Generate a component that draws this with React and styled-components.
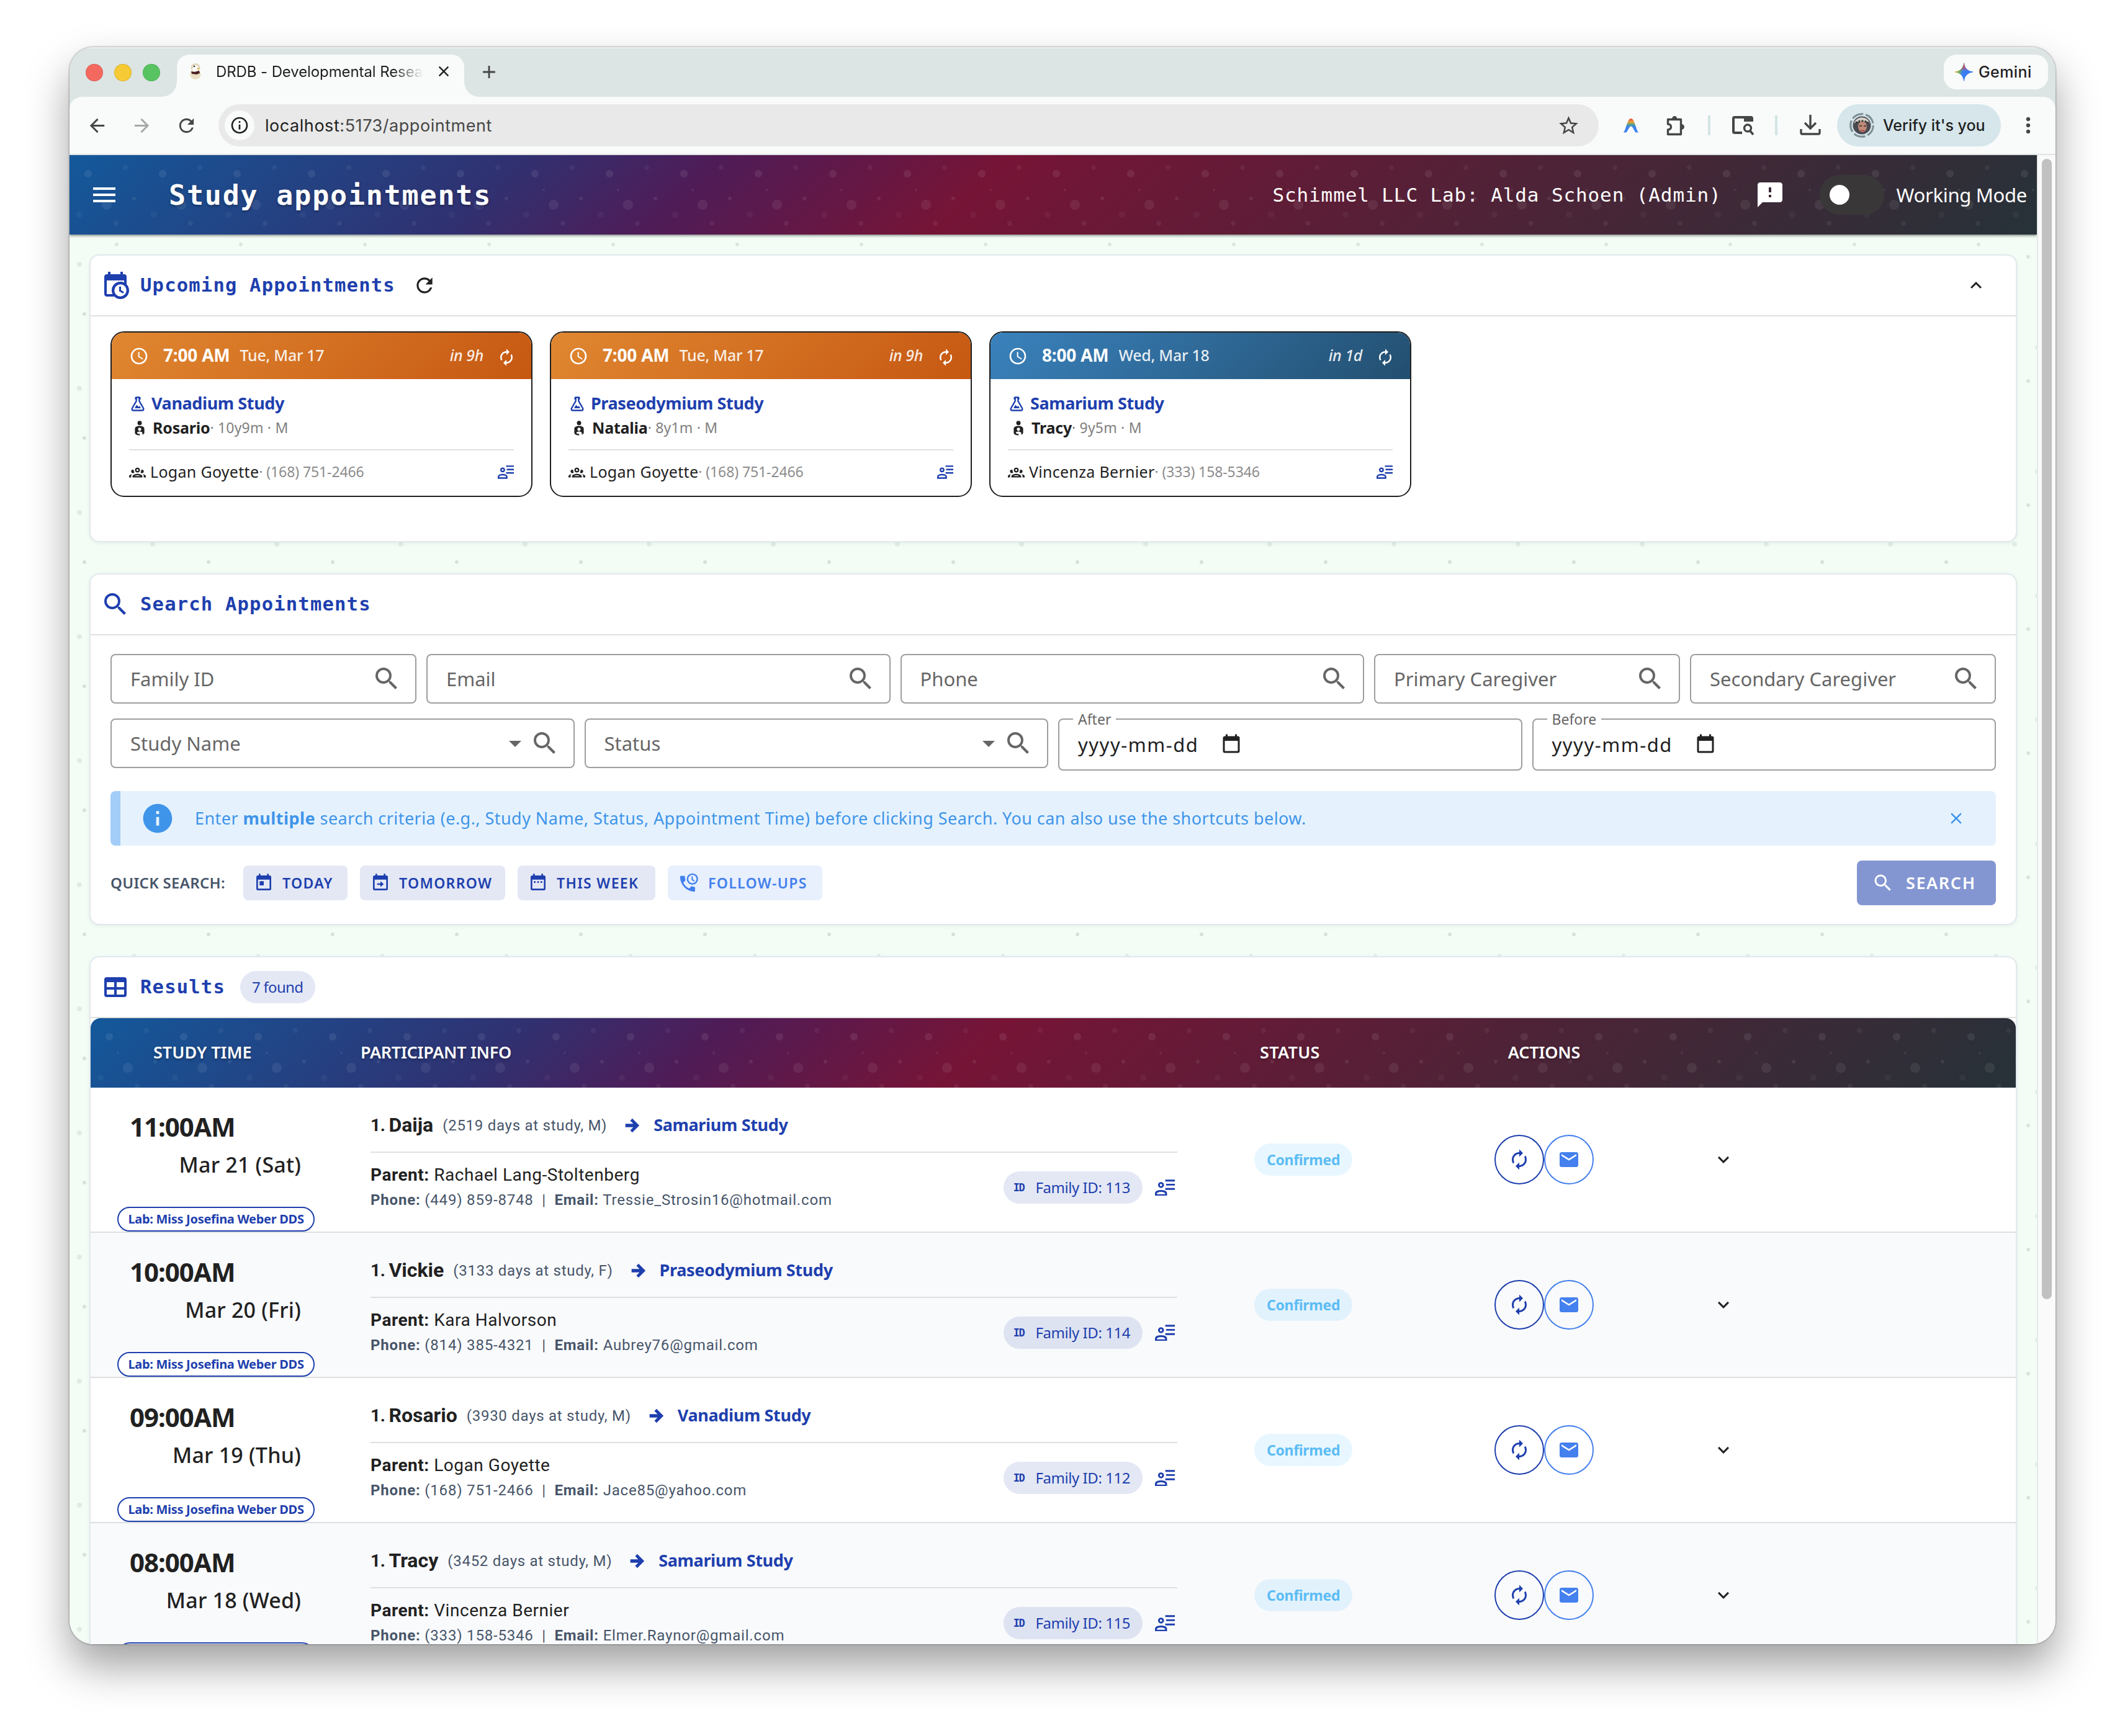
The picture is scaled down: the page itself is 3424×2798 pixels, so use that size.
import React from "react";
import styled, { createGlobalStyle, css } from "styled-components";
import {
  MdMenu, MdFeedback, MdSearch, MdArrowDropDown, MdAccessTime, MdAutorenew,
  MdEmail, MdInfo, MdClose, MdStarOutline, MdAdd, MdArrowBack, MdArrowForward,
  MdRefresh, MdOutlineFileDownload, MdInfoOutline, MdOutlineExtension, MdMoreVert,
} from "react-icons/md";

const sans = `"Noto Sans", "Open Sans", sans-serif`;
const roboto = `Roboto, "Noto Sans", sans-serif`;
const mono = `"DejaVu Sans Mono", "Liberation Mono", monospace`;
const chrome = `Inter, Roboto, sans-serif`;
const navy = "#1e3fae";
const ink = "#212121";

const GlobalStyle = createGlobalStyle`
  *, *::before, *::after { box-sizing: border-box; }
  body { margin: 0; background: #fff; font-family: ${sans}; color: ${ink}; }
  svg { display: block; flex: none; }
`;

/* ---------- text ---------- */

const Text = styled.span`
  white-space: nowrap;
  flex: none;
  font-family: ${(p) => p.$font || sans};
  font-size: ${(p) => p.$size}px;
  font-weight: ${(p) => p.$weight || 400};
  letter-spacing: ${(p) => p.$ls || 0}px;
  color: ${(p) => p.$color || "inherit"};
  font-style: ${(p) => (p.$italic ? "italic" : "normal")};
  padding-bottom: ${(p) => p.$lift || 0}px;
`;

/* ---------- window ---------- */

const Desktop = styled.div`
  width: 3424px;
  height: 2798px;
  padding: 76px 112px 148px;
  overflow: hidden;
`;

const Window = styled.div`
  width: 3200px;
  height: 2574px;
  display: flex;
  flex-direction: column;
  overflow: hidden;
  border-radius: 38px;
  background: #dce4e4;
  box-shadow: 0 0 3px rgba(0, 0, 0, 0.55), 0 36px 68px rgba(0, 0, 0, 0.37);
`;

const TabStrip = styled.div`
  height: 80px;
  flex: none;
  display: flex;
  align-items: flex-end;
  padding: 0 12px 0 26px;
  background: #dce4e4;
  box-shadow: inset 0 2px 0 rgba(255, 255, 255, 0.45);
`;

const Lights = styled.div`
  display: flex;
  gap: 18px;
  margin-bottom: 25px;
`;

const Light = styled.i`
  width: 28px;
  height: 28px;
  border-radius: 50%;
  background: ${(p) => p.$color};
  box-shadow: inset 0 0 0 1px rgba(0, 0, 0, 0.1);
`;

const Tab = styled.div`
  position: relative;
  width: 463px;
  height: 68px;
  margin-left: 27px;
  padding: 0 20px 14px 20px;
  display: flex;
  align-items: center;
  background: #f9fafa;
  border-radius: 20px 20px 0 0;
  &::before, &::after {
    content: "";
    position: absolute;
    bottom: 0;
    width: 24px;
    height: 24px;
  }
  &::before {
    left: -24px;
    background: radial-gradient(circle at 0 0, transparent 23.5px, #f9fafa 24px);
  }
  &::after {
    right: -24px;
    background: radial-gradient(circle at 100% 0, transparent 23.5px, #f9fafa 24px);
  }
`;

const TabTitle = styled(Text)`
  width: 336px;
  margin-left: 23px;
  overflow: hidden;
  mask-image: linear-gradient(90deg, #000 285px, transparent 334px);
`;

const TabClose = styled(MdClose)`
  width: 28px;
  height: 28px;
  margin-left: 17px;
  color: #1f1f1f;
`;

const NewTab = styled(MdAdd)`
  width: 34px;
  height: 34px;
  margin: 0 auto 23px 23px;
  color: #444746;
`;

const Gemini = styled.div`
  width: 168px;
  height: 56px;
  margin-bottom: 12px;
  display: flex;
  align-items: center;
  gap: 9px;
  padding-left: 18px;
  background: #f9fafa;
  border-radius: 20px;
`;

const Toolbar = styled.div`
  height: 94px;
  flex: none;
  display: flex;
  align-items: center;
  padding: 0 30px;
  background: #f9fafa;
  border-bottom: 2px solid #dfe3e3;
  border-radius: 20px 20px 0 0;
  color: #444746;
`;

const NavIcon = styled.span`
  display: flex;
  flex: none;
  width: 72px;
  margin-left: ${(p) => p.$shift || 0}px;
  opacity: ${(p) => (p.$dim ? 0.45 : 1)};
  svg { width: 35px; height: 35px; }
`;

const Omnibox = styled.div`
  width: 2224px;
  flex: none;
  height: 68px;
  margin-left: -3px;
  display: flex;
  align-items: center;
  padding: 0 30px 0 10px;
  background: #e9e9e9;
  border-radius: 34px;
`;

const SiteInfo = styled.span`
  width: 48px;
  height: 48px;
  margin-right: 17px;
  display: grid;
  place-items: center;
  background: #f9fafa;
  border-radius: 50%;
  color: #1f1f1f;
  svg { width: 32px; height: 32px; }
`;

const Url = styled(Text)`
  flex: 1;
  b { font-weight: 400; color: #1f1f1f; }
`;

const Tools = styled.div`
  display: flex;
  align-items: center;
  flex: 1;
`;

const Divider = styled.i`
  width: 4px;
  height: 32px;
  flex: none;
  background: #d3e5e5;
`;

const Spacer = styled.i`
  width: ${(p) => p.$w}px;
  flex: none;
`;

const Profile = styled.div`
  width: 264px;
  height: 68px;
  flex: none;
  display: flex;
  align-items: center;
  gap: 14px;
  padding-left: 20px;
  background: #d6e6ea;
  border-radius: 34px;
`;

/* ---------- page ---------- */

const Viewport = styled.div`
  flex: 1;
  min-height: 0;
  display: flex;
`;

const dot = (x, y, r, color) =>
  `radial-gradient(circle at ${x}px ${y}px, ${color} ${r - 0.5}px, transparent ${r + 0.5}px)`;

const Page = styled.main`
  width: 3170px;
  overflow: hidden;
  background-color: #f3fdf6;
  background-image: ${[
    dot(76, 144, 3, "#dce5e2"),
    dot(16, 176, 4, "#e0ebe5"),
    dot(24, 56, 3, "#d6e0dd"),
    dot(134, 27, 4, "#e3ede8"),
    dot(104, 90, 3, "#e4eee9"),
    dot(156, 164, 3, "#d9e3e0"),
    dot(171, 110, 4, "#e2ece7"),
  ].join(",")};
  background-size: 200px 200px;
`;

const spectrum = css`
  background-image: ${[
    dot(30, 30, 6, "rgba(255,255,255,.08)"),
    dot(90, 20, 4, "rgba(255,255,255,.05)"),
    dot(104, 70, 3, "rgba(255,255,255,.08)"),
    dot(60, 80, 8, "rgba(255,255,255,.07)"),
    dot(16, 96, 5, "rgba(255,255,255,.04)"),
    dot(75, 110, 4, "rgba(255,255,255,.06)"),
    dot(44, 56, 2, "rgba(255,255,255,.07)"),
  ].join(",")},
    linear-gradient(135deg, #13599b 0%, #303171 22%, #4f1c57 32%, #761436 46%, #263238 100%);
  background-size: 120px 120px, 120px 120px, 120px 120px, 120px 120px, 120px 120px, 120px 120px, 120px 120px, 100% 100%;
`;

const AppBar = styled.header`
  position: relative;
  height: 128px;
  display: flex;
  align-items: center;
  padding: 0 16px 0 32px;
  color: #fff;
  ${spectrum}
  box-shadow: 0 2px 4px rgba(0, 0, 0, 0.45);
`;

const MenuButton = styled(MdMenu)`
  width: 48px;
  height: 48px;
`;

const AppTitle = styled.h1`
  margin: 0 auto 0 80px;
  padding-top: 2px;
  font: 700 45px/60px ${mono};
  letter-spacing: 1.8px;
  text-shadow: 0 2px 4px rgba(0, 0, 0, 0.3);
`;

const Feedback = styled(MdFeedback)`
  width: 48px;
  height: 48px;
  margin: 0 56px 0 54px;
`;

const Switch = styled.span`
  width: 104px;
  height: 64px;
  margin-right: 20px;
  padding: 16px;
  background: #3a3739;
  border-radius: 32px;
  &::after {
    content: "";
    display: block;
    width: 32px;
    height: 32px;
    border-radius: 50%;
    background: #fff;
  }
`;

const Panels = styled.div`
  display: flex;
  flex-direction: column;
  gap: 50px;
  padding: 32px 32px 0;
`;

const Panel = styled.section`
  height: ${(p) => p.$h}px;
  flex: none;
  overflow: hidden;
  background: #fff;
  border: 2px solid #e1e8ee;
  border-radius: 16px;
  box-shadow: 0 2px 6px rgba(0, 0, 0, 0.06);
`;

const PanelHead = styled.div`
  height: 98px;
  display: flex;
  align-items: center;
  padding: 0 46px 0 16px;
  border-bottom: 2px solid #e0e0e0;
  color: ${navy};
`;

const PanelTitle = styled.h2`
  margin: 0 0 0 16px;
  font: 700 30.5px/40px ${mono};
  letter-spacing: 1.2px;
`;

const CardRow = styled.div`
  display: flex;
  gap: 28px;
  padding: 24px 32px;
`;

const tones = {
  orange: "linear-gradient(135deg, #e08731 0%, #c65812 100%)",
  blue: "linear-gradient(135deg, #3a82bd 0%, #234f70 100%)",
};

const Card = styled.article`
  width: 680px;
  height: 267px;
  overflow: hidden;
  background: #fff;
  border: 2px solid #1f1f1f;
  border-radius: 22px;
`;

const CardHead = styled.div`
  height: 75px;
  display: flex;
  align-items: center;
  padding: 0 25px 0 28px;
  background: ${(p) => tones[p.$tone]};
  color: #fff;
`;

const Renew = styled(MdAutorenew)`
  width: 30px;
  height: 30px;
  margin-top: 4px;
`;

const CardBody = styled.div`
  padding: 20px 28px 0;
`;

const Line = styled.div`
  height: ${(p) => p.$h}px;
  display: flex;
  align-items: center;
  padding-left: ${(p) => p.$pl || 0}px;
`;

const Rule = styled.hr`
  height: 2px;
  margin: ${(p) => p.$m || 0};
  border: 0;
  background: #e0e0e0;
`;

const Push = styled.i`
  flex: 1;
`;

/* ---------- search form ---------- */

const Form = styled.div`
  padding: 30px 32px 0;
`;

const Fields = styled.div`
  display: grid;
  grid-template-columns: repeat(12, 1fr);
  gap: 24px 16px;
  align-items: start;
  align-content: start;
  height: 221px;
`;

const Field = styled.div`
  position: relative;
  grid-column: span ${(p) => p.$span};
  height: ${(p) => (p.$tall ? 84 : 80)}px;
  display: flex;
  align-items: center;
  padding: 0 22px 0 30px;
  border: 2px solid #9e9e9e;
  border-radius: 8px;
  color: #666;
`;

const FieldLabel = styled(Text)`
  position: absolute;
  left: 22px;
  top: -18px;
  padding: 0 8px;
  background: #fff;
  line-height: 34px;
`;

const Alert = styled.div`
  height: 88px;
  display: flex;
  align-items: center;
  padding: 0 49px 0 32px;
  background: #e5f2fe;
  border-left: 16px solid #a3cdf9;
  border-radius: 8px;
  color: #3f95e9;
`;

const QuickRow = styled.div`
  height: 72px;
  margin-top: 24px;
  display: flex;
  align-items: center;
  gap: 20px;
`;

const QuickLabel = styled(Text)`
  width: 194px;
`;

const Quick = styled.button`
  width: ${(p) => p.$w}px;
  height: 56px;
  display: flex;
  align-items: center;
  gap: 14px;
  padding: 0 0 0 17px;
  border: 0;
  border-radius: 8px;
  background: ${(p) => (p.$soft ? "#e8effd" : "#e4e8f5")};
  color: ${(p) => (p.$soft ? "#4280ee" : navy)};
`;

const SearchButton = styled.button`
  width: 224px;
  height: 72px;
  margin-left: auto;
  display: flex;
  align-items: center;
  gap: 19px;
  padding: 0 0 0 24px;
  border: 0;
  border-radius: 8px;
  background: #8496d2;
  color: #fff;
`;

/* ---------- results ---------- */

const Pill = styled.span`
  height: 52px;
  display: flex;
  align-items: center;
  flex: none;
  margin-left: ${(p) => p.$ml || 0}px;
  padding: 0 20px 0 ${(p) => p.$pl || 19}px;
  border-radius: 26px;
  background: ${(p) => p.$bg || "rgba(30,63,174,.12)"};
  color: ${(p) => p.$color || navy};
`;

const columns = "419px 1364px 455px 208px 1fr";

const TableHead = styled.div`
  height: 112px;
  display: grid;
  grid-template-columns: ${columns};
  align-items: center;
  border-radius: 16px 16px 0 0;
  color: #fff;
  text-shadow: 0 2px 4px rgba(0, 0, 0, 0.3);
  ${spectrum}
`;

const HeadCell = styled.div`
  display: flex;
  padding-left: ${(p) => p.$pl || 0}px;
  justify-content: ${(p) => (p.$center ? "center" : "flex-start")};
`;

const Row = styled.div`
  height: 234px;
  display: grid;
  grid-template-columns: ${columns};
  border-bottom: 2px solid #dcdedf;
  background: ${(p) => (p.$alt ? "#f9fafc" : "#fff")};
`;

const TimeCell = styled.div`
  display: flex;
  flex-direction: column;
  padding: 39px 80px 0 63px;
  line-height: 48px;
`;

const DateText = styled(Text)`
  align-self: flex-end;
  margin-top: 13px;
`;

const LabChip = styled.span`
  align-self: flex-start;
  width: 318px;
  height: 40px;
  margin: auto 0 0 -20px;
  display: flex;
  align-items: center;
  justify-content: center;
  border: 2px solid ${navy};
  border-radius: 20px;
  background: #fff;
  color: ${navy};
`;

const InfoCell = styled.div`
  padding: 36px 32px 0;
`;

const Family = styled.div`
  display: flex;
  align-items: center;
  height: 82px;
  margin-top: 15px;
  padding-right: 4px;
`;

const Lines = styled.div`
  display: flex;
  flex-direction: column;
  flex: 1;
  line-height: 40px;
`;

const MidCell = styled.div`
  display: flex;
  align-items: center;
  padding-left: ${(p) => p.$pl || 0}px;
`;

const Round = styled.button`
  width: 80px;
  height: 80px;
  padding: 0;
  display: grid;
  place-items: center;
  flex: none;
  border: 2px solid currentColor;
  border-radius: 50%;
  background: transparent;
  color: ${(p) => p.$color};
  svg { width: 36px; height: 36px; }
`;

const Scrollbar = styled.aside`
  width: 30px;
  padding: 6px 6px 0;
  background: #fafafa;
  border-left: 2px solid #e6e9e8;
`;

const Thumb = styled.div`
  width: 16px;
  height: 1838px;
  border-radius: 8px;
  background: #c1c1c1;
`;

/* ---------- icons ---------- */

const Glyph = ({ d, size, children, box = "0 0 24 24", h, color = "currentColor" }) => (
  <svg width={size} height={h || size} viewBox={box} fill={color}>
    {d && <path d={d} fillRule="evenodd" />}
    {children}
  </svg>
);

const frame = "M19,19H5V8H19M19,3H18V1H16V3H8V1H6V3H5C3.89,3 3,3.9 3,5V19A2,2 0 0,0 5,21H19A2,2 0 0,0 21,19V5A2,2 0 0,0 19,3Z";
const paths = {
  calendarClock: "M15,13H16.5V15.82L18.94,17.23L18.19,18.53L15,16.69V13M19,8H5V19H9.67C9.24,18.09 9,17.07 9,16A7,7 0 0,1 16,9C17.07,9 18.09,9.24 19,9.67V8M5,21C3.89,21 3,20.1 3,19V5C3,3.89 3.89,3 5,3H6V1H8V3H16V1H18V3H19A2,2 0 0,1 21,5V11.1C22.24,12.36 23,14.09 23,16A7,7 0 0,1 16,23C14.09,23 12.36,22.24 11.1,21H5M16,11.15A4.85,4.85 0 0,0 11.15,16C11.15,18.68 13.32,20.85 16,20.85A4.85,4.85 0 0,0 20.85,16C20.85,13.32 18.68,11.15 16,11.15Z",
  flask: "M5,19A1,1 0 0,0 6,20H18A1,1 0 0,0 19,19C19,18.79 18.93,18.59 18.82,18.43L13,8.35V4H11V8.35L5.18,18.43C5.07,18.59 5,18.79 5,19M6,22A3,3 0 0,1 3,19C3,18.4 3.18,17.84 3.5,17.37L9,7.81V6A1,1 0 0,1 8,5V4A2,2 0 0,1 10,2H14A2,2 0 0,1 16,4V5A1,1 0 0,1 15,6V7.81L20.5,17.37C20.82,17.84 21,18.4 21,19A3,3 0 0,1 18,22H6M13,16L14.34,14.66L16.27,18H7.73L10.39,13.39L13,16Z",
  child: "M12,2A3,3 0 0,1 15,5A3,3 0 0,1 12,8A3,3 0 0,1 9,5A3,3 0 0,1 12,2M12,9C15.6,9 18.5,10.4 18.5,12.8V18.4C18.5,19.6 17.6,20.5 15.9,21.2V19C15.9,17.7 14.2,16.8 12,16.8C9.8,16.8 8.4,17.7 8.4,18.6C8.4,19.3 9.3,19.8 12.2,20V22C8,21.9 5.5,20.5 5.5,18.4V12.8C5.5,10.4 8.4,9 12,9M12,11.4A2.2,2.2 0 0,0 9.8,13.6A2.2,2.2 0 0,0 12,15.8A2.2,2.2 0 0,0 14.2,13.6A2.2,2.2 0 0,0 12,11.4Z",
  group: "M12,5A3.5,3.5 0 0,0 8.5,8.5A3.5,3.5 0 0,0 12,12A3.5,3.5 0 0,0 15.5,8.5A3.5,3.5 0 0,0 12,5M12,7A1.5,1.5 0 0,1 13.5,8.5A1.5,1.5 0 0,1 12,10A1.5,1.5 0 0,1 10.5,8.5A1.5,1.5 0 0,1 12,7M5.5,8A2.5,2.5 0 0,0 3,10.5C3,11.44 3.53,12.25 4.29,12.68C4.65,12.88 5.06,13 5.5,13C5.94,13 6.35,12.88 6.71,12.68C7.08,12.47 7.39,12.17 7.62,11.81C6.89,10.86 6.5,9.7 6.5,8.5C6.5,8.41 6.5,8.31 6.5,8.22C6.2,8.08 5.86,8 5.5,8M18.5,8C18.14,8 17.8,8.08 17.5,8.22C17.5,8.31 17.5,8.41 17.5,8.5C17.5,9.7 17.11,10.86 16.38,11.81C16.5,12 16.63,12.15 16.78,12.3C16.94,12.45 17.1,12.58 17.29,12.68C17.65,12.88 18.06,13 18.5,13C18.94,13 19.35,12.88 19.71,12.68C20.47,12.25 21,11.44 21,10.5A2.5,2.5 0 0,0 18.5,8M12,14C9.66,14 5,15.17 5,17.5V19H19V17.5C19,15.17 14.34,14 12,14M4.71,14.55C2.78,14.78 0,15.76 0,17.5V19H3V17.07C3,16.06 3.69,15.22 4.71,14.55M19.29,14.55C20.31,15.22 21,16.06 21,17.07V19H24V17.5C24,15.76 21.22,14.78 19.29,14.55M12,16C13.53,16 15.24,16.5 16.23,17H7.77C8.76,16.5 10.47,16 12,16Z",
  arrow: "M4,10V14H13L9.5,17.5L11.92,19.92L19.84,12L11.92,4.08L9.5,6.5L13,10H4Z",
  up: "M7.41,15.41L12,10.83L16.59,15.41L18,14L12,8L6,14L7.41,15.41Z",
  down: "M7.41,8.58L12,13.17L16.59,8.58L18,10L12,16L6,10L7.41,8.58Z",
  table: "M5,4H19A2,2 0 0,1 21,6V18A2,2 0 0,1 19,20H5A2,2 0 0,1 3,18V6A2,2 0 0,1 5,4M5,8V12H11V8H5M13,8V12H19V8H13M5,14V18H11V14H5M13,14V18H19V14H13Z",
  today: "M7,10H12V15H7V10Z" + frame,
  tomorrow: "M8,12.6H12V10L16,13.5L12,17V14.4H8V12.6Z" + frame,
  week: "M9,10H7V12H9V10M13,10H11V12H13V10M17,10H15V12H17V10Z" + frame,
  blank: frame,
};

const ContactIcon = ({ size }) => (
  <Glyph size={size} h={size * 0.84} box="0 0 25 21" color={navy}>
    <path d="M13,0.2H25V2.5H13ZM14,5.4H25V7.7H14ZM13,10.700H25V13H13Z" />
    <circle cx="7.6" cy="7" r="2.6" fill="none" stroke={navy} strokeWidth="2.3" />
    <path d="M1.2,19.800V17.6C1.2,15.6 4.4,14.4 7.6,14.4S14,15.6 14,17.6V19.800Z" fill="none" stroke={navy} strokeWidth="2.4" />
  </Glyph>
);

const FollowIcon = () => (
  <Glyph size={34}>
    <path d="M5.62,11.79C7.06,14.62 9.38,16.94 12.21,18.38L14.41,16.18C14.69,15.9 15.08,15.82 15.43,15.93C16.3,16.2 17.3,16.4 18,16.5A1,1 0 0,1 19,17.5V21A1,1 0 0,1 18,22A17,17 0 0,1 2,5A1,1 0 0,1 3,4H6.5A1,1 0 0,1 7.5,5C7.5,6.25 7.7,7.45 8.07,8.57C8.18,8.92 8.1,9.31 7.82,9.59L5.62,11.79Z" />
    <circle cx="16" cy="7.6" r="5.6" fill="none" stroke="currentColor" strokeWidth="1.7" />
    <path d="M15.7,4.5V8.2L18.2,10" fill="none" stroke="currentColor" strokeWidth="1.4" />
  </Glyph>
);

const Favicon = () => (
  <svg width="20" height="26" viewBox="0 0 20 26">
    <ellipse cx="10" cy="18" rx="8.6" ry="8" fill="#eadfc4" />
    <ellipse cx="10" cy="7" rx="7.500" ry="7" fill="#e3d8bd" />
    <path d="M6 5q4-4 8 0l1 6-4 3-6-2z" fill="#fff" />
    <path d="M3 13l5 1 8-2 1 4-5 2-8-1z" fill="#4b2026" />
    <circle cx="8" cy="5" r="1.3" fill="#222" />
    <path d="M13 7l4 1.5-4 2z" fill="#e0a92e" />
  </svg>
);

const GeminiStar = () => (
  <svg width="29" height="30" viewBox="0 0 24 24">
    <defs>
      <linearGradient id="gem" x1="0" y1="0.4" x2="0.7" y2="0.6">
        <stop offset="0" stopColor="#f3b92b" />
        <stop offset="0.35" stopColor="#6fae5c" />
        <stop offset="0.6" stopColor="#3b82f6" />
        <stop offset="1" stopColor="#3b78f0" />
      </linearGradient>
      <linearGradient id="gemTop" x1="0" y1="0" x2="0" y2="1">
        <stop offset="0" stopColor="#ea4335" />
        <stop offset="0.2" stopColor="#ea4335" stopOpacity="0.8" />
        <stop offset="0.45" stopColor="#ea4335" stopOpacity="0" />
      </linearGradient>
    </defs>
    <path d="M12 0C12.8 7 17 11.2 24 12C17 12.8 12.8 17 12 24C11.2 17 7 12.8 0 12C7 11.2 11.2 7 12 0Z" fill="url(#gem)" stroke="url(#gem)" strokeWidth="0.8" />
    <path d="M12 0C12.8 7 17 11.2 24 12C17 12.8 12.8 17 12 24C11.2 17 7 12.8 0 12C7 11.2 11.2 7 12 0Z" fill="url(#gemTop)" />
  </svg>
);

const ArcIcon = () => (
  <svg width="24" height="24" viewBox="0 0 24 24">
    <defs>
      <linearGradient id="arc" x1="0" y1="0" x2="0" y2="1">
        <stop offset="0" stopColor="#e8453c" />
        <stop offset="0.25" stopColor="#e9a13a" />
        <stop offset="0.45" stopColor="#4c9f8f" />
        <stop offset="0.6" stopColor="#3b82f0" />
        <stop offset="1" stopColor="#3f83f2" />
      </linearGradient>
    </defs>
    <path d="M0 23.5C4.5 18 6 1 12 1S19.500 18 24 23.5L19.500 23.500C16 19 14.500 13.500 12 13.500S8 19 4.500 23.500Z" fill="url(#arc)" />
  </svg>
);

const ReaderIcon = () => (
  <svg width="36" height="32" viewBox="0 0 36 32" fill="none" stroke="currentColor" strokeWidth="4">
    <path d="M16 28H4a2 2 0 0 1-2-2V5a2 2 0 0 1 2-2h26a2 2 0 0 1 2 2v5" />
    <path d="M19 3h13v7H19z" fill="currentColor" stroke="none" />
    <circle cx="25" cy="20.500" r="5.500" strokeWidth="3.400" />
    <path d="M29 25l5 6" strokeWidth="3.600" />
  </svg>
);

const DownloadIcon = () => (
  <svg width="34" height="34" viewBox="0 0 34 34" fill="none" stroke="currentColor" strokeWidth="3.400">
    <path d="M17 0V21M8 13L17 22L26 13M2 23V29A2 2 0 0 0 4 31H30A2 2 0 0 0 32 29V23" />
  </svg>
);

const PuzzleIcon = () => (
  <svg width="34" height="34" viewBox="0 0 34 34">
    <path d="M3.500 7.500H24.500V31.500H3.500V24C7 24 8.500 21.500 8.500 19.500S7 15 3.500 15Z" fill="none" stroke="currentColor" strokeWidth="3.400" strokeLinejoin="round" />
    <path d="M10 7a4.200 5 0 0 1 8.400 0zM25 15a5 4.500 0 0 1 0 9z" fill="currentColor" />
  </svg>
);

const Avatar = () => (
  <svg width="40" height="40" viewBox="0 0 40 40">
    <circle cx="20" cy="20" r="18.300" fill="none" stroke="#7d8f93" strokeWidth="3" strokeDasharray="19 4" />
    <circle cx="20" cy="20" r="14.500" fill="#4a4a52" />
    <path d="M7 17a13.500 13.500 0 0 1 26 0l-4-3-8 2-8-2z" fill="#d8d4cc" />
    <ellipse cx="21" cy="22" rx="7" ry="9" fill="#c08a78" />
    <path d="M10 16q10-6 21 0" stroke="#3a3434" strokeWidth="3" fill="none" strokeDasharray="3 2" />
    <path d="M16 21h4m3 0h4" stroke="#2c2626" strokeWidth="1.600" />
    <path d="M18 28q3 1.500 6 0" stroke="#b2433f" strokeWidth="1.600" fill="none" />
  </svg>
);

/* ---------- data ---------- */

const upcoming = [
  { tone: "orange", time: "7:00 AM", date: "Tue, Mar 17", in: "in 9h", study: "Vanadium Study", child: "Rosario", age: "· 10y9m · M", parent: "Logan Goyette", phone: "· (168) 751-2466" },
  { tone: "orange", time: "7:00 AM", date: "Tue, Mar 17", in: "in 9h", study: "Praseodymium Study", child: "Natalia", age: "· 8y1m · M", parent: "Logan Goyette", phone: "· (168) 751-2466" },
  { tone: "blue", time: "8:00 AM", date: "Wed, Mar 18", in: "in 1d", study: "Samarium Study", child: "Tracy", age: "· 9y5m · M", parent: "Vincenza Bernier", phone: "· (333) 158-5346" },
];

const results = [
  { time: "11:00AM", date: "Mar 21 (Sat)", name: "Daija", age: "(2519 days at study, M)", study: "Samarium Study", parent: "Rachael Lang-Stoltenberg", phone: "(449) 859-8748", email: "Tressie_Strosin16@hotmail.com", family: 113 },
  { time: "10:00AM", date: "Mar 20 (Fri)", name: "Vickie", age: "(3133 days at study, F)", study: "Praseodymium Study", parent: "Kara Halvorson", phone: "(814) 385-4321", email: "Aubrey76@gmail.com", family: 114 },
  { time: "09:00AM", date: "Mar 19 (Thu)", name: "Rosario", age: "(3930 days at study, M)", study: "Vanadium Study", parent: "Logan Goyette", phone: "(168) 751-2466", email: "Jace85@yahoo.com", family: 112 },
  { time: "08:00AM", date: "Mar 18 (Wed)", name: "Tracy", age: "(3452 days at study, M)", study: "Samarium Study", parent: "Vincenza Bernier", phone: "(333) 158-5346", email: "Elmer.Raynor@gmail.com", family: 115 },
];

/* ---------- parts ---------- */

const BrowserChrome = () => (
  <>
    <TabStrip>
      <Lights>
        <Light $color="#f4695f" />
        <Light $color="#f6ca34" />
        <Light $color="#58c461" />
      </Lights>
      <Tab>
        <Favicon />
        <TabTitle $font={chrome} $size={24} $ls={-0.1} $color="#1f1f1f">DRDB - Developmental Research</TabTitle>
        <TabClose />
      </Tab>
      <NewTab />
      <Gemini>
        <GeminiStar />
        <Text $font={chrome} $size={25} $weight={500} $ls={0.4} $color="#1f1f1f">Gemini</Text>
      </Gemini>
    </TabStrip>
    <Toolbar>
      <NavIcon $shift={-3}><MdArrowBack /></NavIcon>
      <NavIcon $dim><MdArrowForward /></NavIcon>
      <NavIcon><MdRefresh /></NavIcon>
      <Omnibox>
        <SiteInfo><MdInfoOutline /></SiteInfo>
        <Url $font={chrome} $size={27} $ls={0.55} $color="#474747"><b>localhost</b>:5173/appointment</Url>
        <MdStarOutline size={37} />
      </Omnibox>
      <Tools>
        <Spacer $w={40} />
        <ArcIcon />
        <Spacer $w={44} />
        <PuzzleIcon />
        <Spacer $w={34} />
        <Divider />
        <Spacer $w={35} />
        <ReaderIcon />
        <Spacer $w={33} />
        <Divider />
        <Spacer $w={36} />
        <DownloadIcon />
        <Spacer $w={26} />
        <Profile>
          <Avatar />
          <Text $font={chrome} $size={25} $weight={500} $color="#1f1f1f">Verify it's you</Text>
        </Profile>
        <Spacer $w={24} />
        <MdMoreVert size={40} />
      </Tools>
    </Toolbar>
  </>
);

const UpcomingCard = ({ item }) => (
  <Card>
    <CardHead $tone={item.tone}>
      <MdAccessTime size={32} />
      <Spacer $w={23} />
      <Text $size={28} $weight={700} $ls={-0.2} $lift={3}>{item.time}</Text>
      <Spacer $w={16} />
      <Text $size={25} $weight={500} $ls={-0.3} $lift={3} $color="rgba(255,255,255,.9)">{item.date}</Text>
      <Push />
      <Text $size={25} $weight={500} $italic $ls={-0.4} $lift={3} $color="rgba(255,255,255,.9)">{item.in}</Text>
      <Spacer $w={22} />
      <Renew />
    </CardHead>
    <CardBody>
      <Line $h={40}>
        <Glyph d={paths.flask} size={28} color={navy} />
        <Spacer $w={8} />
        <Text $size={27} $weight={700} $ls={-0.4} $lift={3} $color={navy}>{item.study}</Text>
      </Line>
      <Line $h={38} $pl={3}>
        <Glyph d={paths.child} size={28} color={ink} />
        <Spacer $w={7} />
        <Text $size={25} $weight={700} $ls={-0.2} $lift={3}>{item.child}</Text>
        <Text $size={23} $ls={0.2} $lift={3} $color="#808080">{item.age}</Text>
      </Line>
      <Rule $m="15px 0 16px" />
      <Line $h={38}>
        <Glyph d={paths.group} size={27} color={ink} />
        <Spacer $w={7} />
        <Text $size={25} $ls={0.3} $lift={2}>{item.parent}</Text>
        <Text $size={23} $ls={-0.1} $lift={2} $color="#8c8c8c">{item.phone}</Text>
        <Push />
        <ContactIcon size={26} />
      </Line>
    </CardBody>
  </Card>
);

const SearchField = ({ label, span, menu }) => (
  <Field $span={span}>
    <Text $size={31} $ls={0}>{label}</Text>
    <Push />
    {menu && <MdArrowDropDown size={48} />}
    <MdSearch size={48} />
  </Field>
);

const DateField = ({ label }) => (
  <Field $span={3} $tall>
    <FieldLabel $size={23}>{label}</FieldLabel>
    <Text $size={31} $ls={1.5} $color={ink}>yyyy-mm-dd</Text>
    <Spacer $w={35} />
    <Glyph d={paths.blank} size={36} color={ink} />
  </Field>
);

const QuickButton = ({ w, soft, icon, children }) => (
  <Quick $w={w} $soft={soft}>
    {icon}
    <Text $size={23} $weight={600} $ls={1.35}>{children}</Text>
  </Quick>
);

const ResultRow = ({ row, alt }) => (
  <Row $alt={alt}>
    <TimeCell>
      <Text $size={42} $weight={700} $ls={-1}>{row.time}</Text>
      <DateText $size={34} $weight={500} $ls={0.2}>{row.date}</DateText>
      <LabChip>
        <Text $size={20} $weight={700} $ls={-0.3}>Lab: Miss Josefina Weber DDS</Text>
      </LabChip>
    </TimeCell>
    <InfoCell>
      <Line $h={50}>
        <Text $font={roboto} $size={28} $weight={700} $ls={-0.4} $lift={1}>1.</Text>
        <Spacer $w={6} />
        <Text $font={roboto} $size={32} $weight={700} $lift={2}>{row.name}</Text>
        <Spacer $w={15} />
        <Text $font={roboto} $size={24} $ls={0.73} $color="#475569">{row.age}</Text>
        <Spacer $w={24} />
        <Glyph d={paths.arrow} size={34} color={navy} />
        <Spacer $w={17} />
        <Text $size={27} $weight={700} $ls={-0.35} $lift={3} $color={navy}>{row.study}</Text>
      </Line>
      <Rule $m="17px 0 0" />
      <Family>
        <Lines>
          <Text $font={roboto} $size={28} $ls={0.53}><b>Parent:</b> {row.parent}</Text>
          <Text $font={roboto} $size={24} $ls={0.81} $color="#475569">
            <b>Phone:</b> {row.phone}&nbsp; |&nbsp; <b>Email:</b> {row.email}
          </Text>
        </Lines>
        <Pill $pl={16}>
          <Text $font={mono} $size={17} $weight={700} $ls={-1.3}>ID</Text>
          <Spacer $w={18} />
          <Text $size={24} $ls={-0.45} $lift={1}>Family ID: {row.family}</Text>
        </Pill>
        <Spacer $w={20} />
        <ContactIcon size={32} />
      </Family>
    </InfoCell>
    <MidCell $pl={92}>
      <Pill $pl={20} $bg="rgba(79,195,255,.13)" $color="#5bbcf5">
        <Text $size={23} $weight={700} $ls={-0.3} $lift={1}>Confirmed</Text>
      </Pill>
    </MidCell>
    <MidCell $pl={24}>
      <Round $color={navy}><MdAutorenew /></Round>
      <Round $color="#4480ee"><MdEmail /></Round>
    </MidCell>
    <MidCell $pl={167}>
      <Glyph d={paths.down} size={36} color={ink} />
    </MidCell>
  </Row>
);

export default function App() {
  return (
    <Desktop>
      <GlobalStyle />
      <Window>
        <BrowserChrome />
        <Viewport>
          <Page>
            <AppBar>
              <MenuButton />
              <AppTitle>Study appointments</AppTitle>
              <Text $font={mono} $size={31} $ls={0.88}>Schimmel LLC Lab: Alda Schoen (Admin)</Text>
              <Feedback />
              <Switch />
              <Text $size={31} $ls={-0.3} $lift={1}>Working Mode</Text>
            </AppBar>
            <Panels>
              <Panel $h={464}>
                <PanelHead>
                  <Glyph d={paths.calendarClock} size={48} />
                  <PanelTitle>Upcoming Appointments</PanelTitle>
                  <Spacer $w={28} />
                  <MdRefresh size={38} color={ink} />
                  <Push />
                  <Glyph d={paths.up} size={36} color={ink} />
                </PanelHead>
                <CardRow>
                  {upcoming.map((item) => <UpcomingCard key={item.study} item={item} />)}
                </CardRow>
              </Panel>

              <Panel $h={567}>
                <PanelHead>
                  <MdSearch size={48} />
                  <PanelTitle>Search Appointments</PanelTitle>
                </PanelHead>
                <Form>
                  <Fields>
                    <SearchField label="Family ID" span={2} />
                    <SearchField label="Email" span={3} />
                    <SearchField label="Phone" span={3} />
                    <SearchField label="Primary Caregiver" span={2} />
                    <SearchField label="Secondary Caregiver" span={2} />
                    <SearchField label="Study Name" span={3} menu />
                    <SearchField label="Status" span={3} menu />
                    <DateField label="After" />
                    <DateField label="Before" />
                  </Fields>
                  <Alert>
                    <MdInfo size={56} />
                    <Spacer $w={32} />
                    <Text $size={27} $ls={0.45} $lift={1}>
                      Enter <b>multiple</b> search criteria (e.g., Study Name, Status, Appointment Time) before clicking Search. You can also use the shortcuts below.
                    </Text>
                    <Push />
                    <MdClose size={30} />
                  </Alert>
                  <QuickRow>
                    <QuickLabel $size={24} $weight={600} $ls={0.3} $lift={1} $color="#475569">QUICK SEARCH:</QuickLabel>
                    <QuickButton w={168} icon={<Glyph d={paths.today} size={32} />}>TODAY</QuickButton>
                    <QuickButton w={234} icon={<Glyph d={paths.tomorrow} size={32} />}>TOMORROW</QuickButton>
                    <QuickButton w={222} icon={<Glyph d={paths.week} size={32} />}>THIS WEEK</QuickButton>
                    <QuickButton w={249} soft icon={<FollowIcon />}>FOLLOW-UPS</QuickButton>
                    <SearchButton>
                      <MdSearch size={36} />
                      <Text $size={27} $weight={600} $ls={1.6} $lift={2}>SEARCH</Text>
                    </SearchButton>
                  </QuickRow>
                </Form>
              </Panel>

              <Panel $h={1300}>
                <PanelHead>
                  <Glyph d={paths.table} size={48} />
                  <PanelTitle>Results</PanelTitle>
                  <Pill $ml={24}><Text $size={24} $ls={-0.7} $lift={1}>7 found</Text></Pill>
                </PanelHead>
                <TableHead>
                  <HeadCell $pl={101}><Text $size={27} $weight={600} $ls={0} $lift={4}>STUDY TIME</Text></HeadCell>
                  <HeadCell $pl={16}><Text $size={27} $weight={600} $ls={-0.3} $lift={4}>PARTICIPANT INFO</Text></HeadCell>
                  <HeadCell $pl={101}><Text $size={27} $weight={600} $ls={0.3} $lift={4}>STATUS</Text></HeadCell>
                  <HeadCell $center><Text $size={27} $weight={600} $ls={-0.2} $lift={4}>ACTIONS</Text></HeadCell>
                </TableHead>
                {results.map((row, i) => <ResultRow key={row.time} row={row} alt={i % 2 === 1} />)}
              </Panel>
            </Panels>
          </Page>
          <Scrollbar><Thumb /></Scrollbar>
        </Viewport>
      </Window>
    </Desktop>
  );
}
